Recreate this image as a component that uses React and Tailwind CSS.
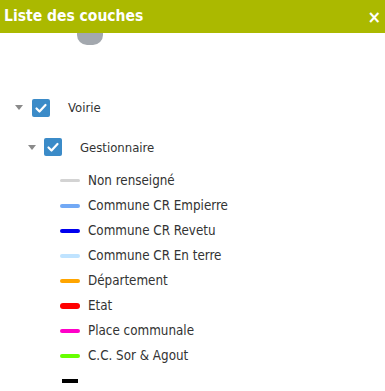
import React from "react";

const items = [
  { label: "Non renseigné", color: "bg-[#d3d3d3]", h: "h-[3px]" },
  { label: "Commune CR Empierre", color: "bg-[#72a9f5]", h: "h-[4px]" },
  { label: "Commune CR Revetu", color: "bg-[#0000ee]", h: "h-[4px]" },
  { label: "Commune CR En terre", color: "bg-[#bfe3ff]", h: "h-[4px]" },
  { label: "Département", color: "bg-[#ffa500]", h: "h-[4px]" },
  { label: "Etat", color: "bg-[#ff0000]", h: "h-[6px]" },
  { label: "Place communale", color: "bg-[#ff00c8]", h: "h-[4px]" },
  { label: "C.C. Sor & Agout", color: "bg-[#66ff00]", h: "h-[4px]" },
];

function Check() {
  return (
    <div className="flex h-[18px] w-[18px] items-center justify-center rounded-[2px] bg-[#3b8bc8]">
      <svg viewBox="0 0 18 18" className="h-[18px] w-[18px]" fill="none" stroke="white" strokeWidth="2.2" strokeLinecap="round" strokeLinejoin="round">
        <path d="M4.5 9.5l3 3 6-6.5" />
      </svg>
    </div>
  );
}

function Caret() {
  return (
    <svg viewBox="0 0 8 5" className="h-[5px] w-[8px]">
      <path d="M0 0h8L4 5z" fill="#8a8a8a" />
    </svg>
  );
}

export default function App() {
  return (
    <div className="h-[391px] w-[385px] overflow-hidden bg-white" style={{ fontFamily: "'DejaVu Sans Condensed', 'DejaVu Sans', sans-serif" }}>
      <div className="flex h-[33px] items-center justify-between bg-[#abb900] pl-[4px] pr-[4px]">
        <span className="text-[15.5px] font-bold text-white">Liste des couches</span>
        <span className="text-[18px] font-bold leading-none text-white">×</span>
      </div>
      <div className="ml-[77px] h-[12px] w-[26px] rounded-b-[10px] bg-[#a3a8ae]" />

      <div className="mt-[53px] flex items-center pl-[15px]">
        <Caret />
        <div className="ml-[9px]"><Check /></div>
        <span className="ml-[18px] text-[13px] text-[#333]">Voirie</span>
      </div>

      <div className="mt-[20px] flex items-center pl-[28px]">
        <Caret />
        <div className="ml-[8px]"><Check /></div>
        <span className="ml-[18px] text-[13px] text-[#333]">Gestionnaire</span>
      </div>

      <div className="mt-[11px] flex flex-col">
        {items.map((it) => (
          <div key={it.label} className="flex h-[25px] items-center">
            <div className="flex w-[88px] justify-start pl-[60px]">
              <div className={`w-[20px] rounded-full ${it.h} ${it.color}`} />
            </div>
            <span className="text-[13.3px] text-[#333]">{it.label}</span>
          </div>
        ))}
        <div className="flex h-[25px] items-center">
          <div className="ml-[62px] h-[4px] w-[16px] bg-black" />
        </div>
      </div>
    </div>
  );
}
